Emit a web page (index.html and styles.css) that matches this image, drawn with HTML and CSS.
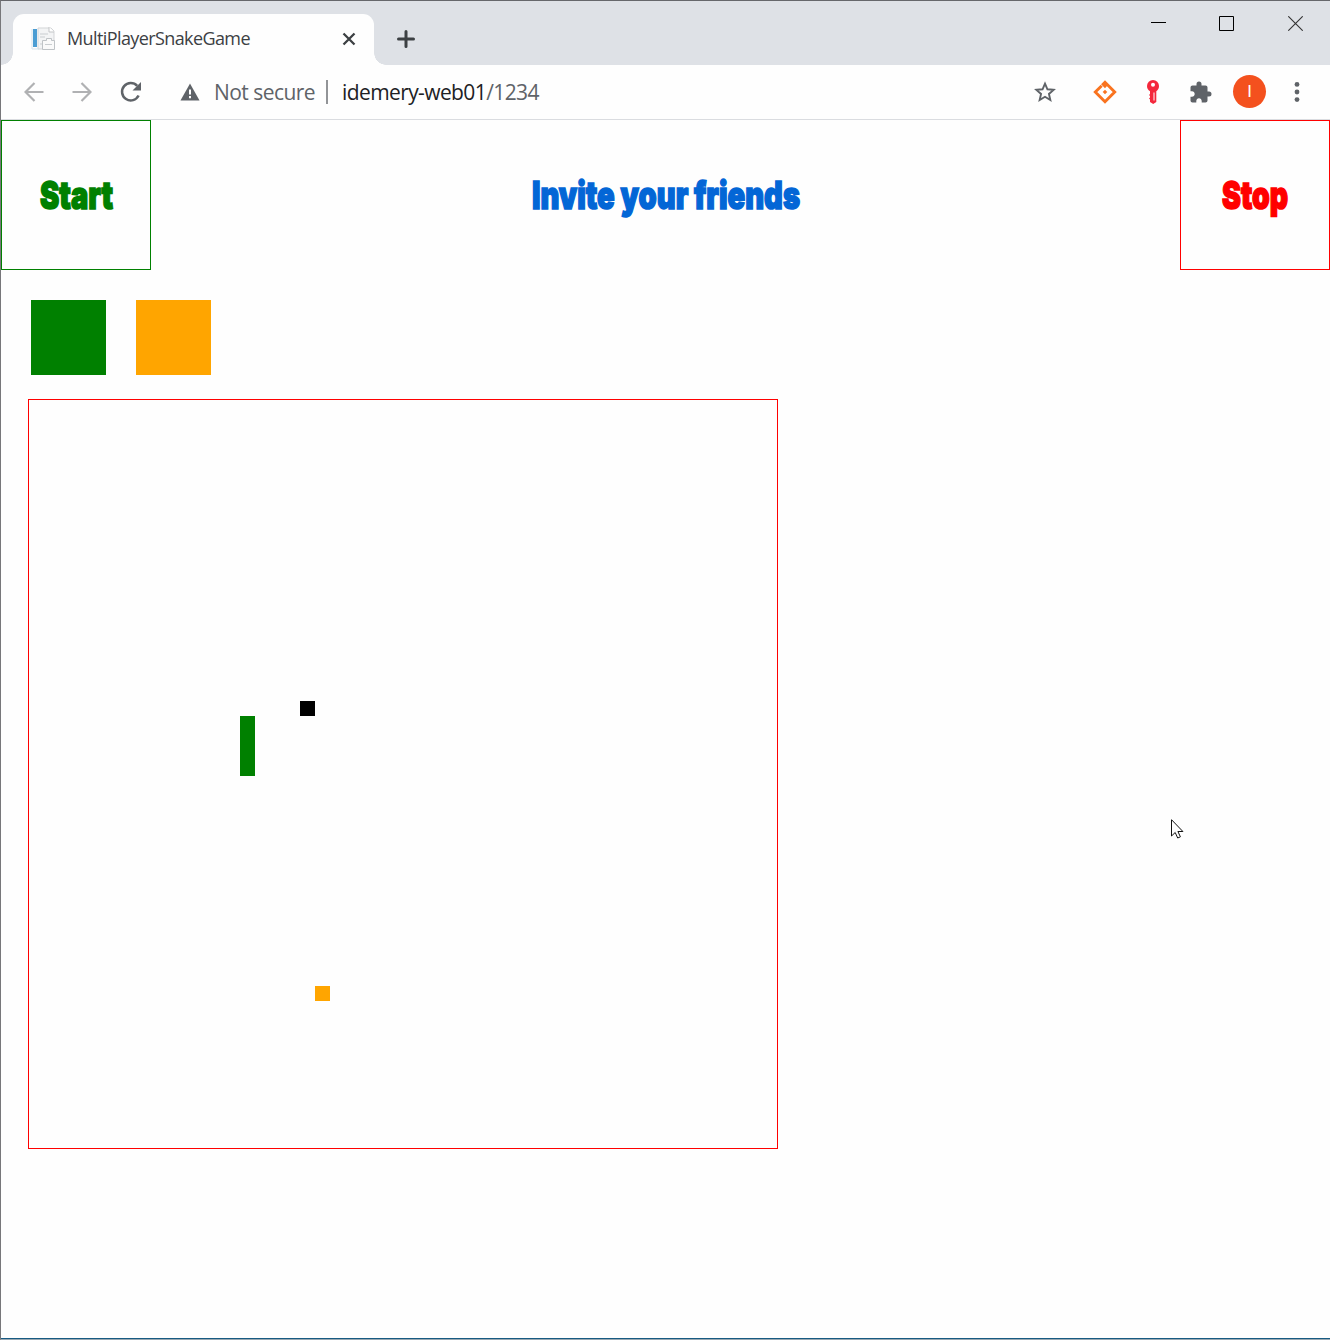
FILE: index.html
```html
<!DOCTYPE html>
<html lang="en">
<head>
<meta charset="utf-8">
<title>MultiPlayerSnakeGame</title>
<link rel="stylesheet" href="styles.css">
</head>
<body>
<div class="window">
  <header class="tabstrip">
    <div class="tab">
      <svg class="favicon" width="24" height="26" viewBox="0 0 24 26">
        <path d="M7 2h13l3 3v18H7z" fill="#f3f4f5" stroke="#d3d5d7"/>
        <path d="M18 1v5h5" fill="#fff" stroke="#c3c5c7"/>
        <path d="M1 3v20h7" fill="none" stroke="#d5e3ec"/>
        <path d="M2 3h4v18H2z" fill="#4b9dd3"/>
        <path d="M9 8h8M9 11h5M9 18h3" stroke="#c9cdd0"/>
        <path d="M11.500 14.500h4v-2h5v2h3v9h-12z" fill="#fafafa" stroke="#bfc3c6"/>
        <path d="M14 18.500h7" stroke="#c9cdd0"/>
      </svg>
      <span class="tab-title">MultiPlayerSnakeGame</span>
      <svg class="tab-close" width="14" height="14" viewBox="0 0 14 14"><path d="M1.500 1.500l11 11M12.500 1.500l-11 11" stroke="#3c4043" stroke-width="2.300"/></svg>
    </div>
    <svg class="new-tab" width="18" height="18" viewBox="0 0 18 18"><path d="M9 1.500v15M1.500 9h15" stroke="#3c4043" stroke-width="3" stroke-linecap="round"/></svg>
    <div class="window-buttons">
      <svg width="15" height="15" viewBox="0 0 15 15"><path d="M0 6.500h15" stroke="#000"/></svg>
      <svg width="15" height="15" viewBox="0 0 15 15"><path d="M.5 .5h14v14H.5z" fill="none" stroke="#000"/></svg>
      <svg width="15" height="15" viewBox="0 0 15 15"><path d="M.3 .3l14.400 14.400M14.700 .3L.3 14.700" stroke="#333" stroke-width="1.100"/></svg>
    </div>
  </header>
  <nav class="toolbar">
    <svg class="icon back" width="20" height="20" viewBox="0 0 20 20"><path d="M19.500 10H2M10.500 1L1.500 10l9 9" fill="none" stroke="#b0b1b3" stroke-width="2.200"/></svg>
    <svg class="icon forward" width="20" height="20" viewBox="0 0 20 20"><path d="M.5 10H18M9.500 1l9 9-9 9" fill="none" stroke="#b0b1b3" stroke-width="2.200"/></svg>
    <svg class="icon reload" width="22" height="22" viewBox="0 0 22 22"><path d="M18.600 14.500A8.700 8.700 0 1 1 17.200 4.900" fill="none" stroke="#5f6368" stroke-width="2.500"/><path d="M21 1v8.500h-8.500z" fill="#5f6368"/></svg>
    <svg class="icon warning" width="20" height="18" viewBox="0 0 20 18"><path d="M10 .5L19.500 17.500H.5z" fill="#5f6368"/><path d="M10 6.500v5M10 13v2.200" stroke="#fff" stroke-width="2"/></svg>
    <span class="secure">Not secure</span>
    <span class="divider"></span>
    <span class="address">idemery-web01<span class="path">/1234</span></span>
    <div class="actions">
      <svg width="22" height="22" viewBox="0 0 22 22"><path d="M11 2.600l2.450 5.700 6.200.55-4.700 4.100 1.400 6.050L11 15.800 5.650 19l1.400-6.050-4.700-4.100 6.200-.55z" fill="none" stroke="#5f6368" stroke-width="1.900"/></svg>
      <svg width="24" height="24" viewBox="0 0 24 24"><path d="M8.700 5.700L2.300 12l9.700 9.700 9.700-9.700L12 2.300l-1.900 1.900 2.900 2.900" fill="none" stroke="#f9731f" stroke-width="2.900"/><path d="M12 9.700l2.300 2.300-2.300 2.300L9.700 12z" fill="#f9731f"/></svg>
      <svg width="12" height="24" viewBox="0 0 12 24"><path fill-rule="evenodd" d="M6 0a6 6 0 0 1 6 6c0 2.500-1 4-2.700 5.200V22L6.200 24 3 22v-2.500l-1-1 1-1V16l-1-1 1-1v-2.800C1 10 0 8.500 0 6a6 6 0 0 1 6-6zm0 2.800a2 2 0 1 0 0 4 2 2 0 0 0 0-4z" fill="#f4283c"/><path d="M7 12.500v8" stroke="#fff" stroke-width="1"/></svg>
      <svg width="22" height="22" viewBox="1.500 .5 22 22"><path d="M20.500 11H19V7c0-1.100-.9-2-2-2h-4V3.500a2.500 2.500 0 0 0-5 0V5H4c-1.100 0-1.990.9-1.990 2v3.800H3.500c1.490 0 2.700 1.210 2.700 2.700s-1.210 2.700-2.700 2.700H2V20c0 1.100.9 2 2 2h3.800v-1.500c0-1.490 1.210-2.700 2.700-2.700s2.700 1.210 2.700 2.700V22H17c1.100 0 2-.9 2-2v-4h1.500a2.500 2.500 0 0 0 0-5z" fill="#5f6368"/></svg>
      <span class="avatar">I</span>
      <svg width="6" height="20" viewBox="0 0 6 20"><g fill="#5f6368"><circle cx="3" cy="2.400" r="2.400"/><circle cx="3" cy="10" r="2.400"/><circle cx="3" cy="17.600" r="2.400"/></g></svg>
    </div>
  </nav>
  <main class="page">
    <div class="controls">
      <div class="box start"><svg class="label" width="148" height="148"><text x="38" y="88" textLength="73" lengthAdjust="spacingAndGlyphs">Start</text></svg></div>
      <svg class="label invite" width="290" height="148"><text x="11" y="88" textLength="268" lengthAdjust="spacingAndGlyphs">Invite your friends</text></svg>
      <div class="box stop"><svg class="label" width="148" height="148"><text x="41" y="88" textLength="66" lengthAdjust="spacingAndGlyphs">Stop</text></svg></div>
    </div>
    <div class="players"><span class="player green"></span><span class="player orange"></span></div>
    <div class="board">
      <span class="cell food"></span>
      <span class="cell snake-green"></span>
      <span class="cell snake-orange"></span>
    </div>
  </main>
  <svg class="cursor" width="13" height="21" viewBox="0 0 13 21"><path d="M.5 .7v16.300l3.700-3.500 2.500 5.500 2.700-1.200-2.500-5.300h5z" fill="#fff" stroke="#111" stroke-width="1"/></svg>
</div>
</body>
</html>
```
FILE: styles.css
```css
* { box-sizing: border-box; }
body { margin: 0; background: #fefefe; font-family: "Open Sans", "Noto Sans", sans-serif; }
svg { display: block; flex: none; }
.window {
  position: relative;
  height: 1340px;
  display: flex;
  flex-direction: column;
  overflow: hidden;
  border-left: 1px solid #77777a;
  border-top: 1px solid #66676b;
  border-bottom: 1px solid #9aa9b3;
}
.tabstrip { height: 64px; display: flex; align-items: flex-start; background: #dee1e6; }
.tab {
  position: relative;
  width: 361px;
  height: 51px;
  margin: 13px 0 0 12px;
  padding: 0 0 2px 18px;
  display: flex;
  align-items: center;
  background: #fefefe;
  border-radius: 11px 11px 0 0;
}
.tab::before, .tab::after { content: ""; position: absolute; bottom: 0; width: 12px; height: 12px; }
.tab::before { left: -12px; background: radial-gradient(circle at 0 0, #dee1e6 11.500px, #fefefe 12px); }
.tab::after { right: -12px; background: radial-gradient(circle at 100% 0, #dee1e6 11.500px, #fefefe 12px); }
.tab-title { width: 183px; margin-left: 12px; padding-bottom: 2px; font-size: 18px; letter-spacing: -0.600px; color: #3c4043; white-space: nowrap; }
.tab-close { margin-left: 92px; }
.new-tab { margin: 29px 0 0 23px; }
.window-buttons { margin: 15px 27px 0 auto; display: flex; }
.window-buttons svg:nth-child(2) { margin: 0 54px 0 53px; }
.toolbar { height: 55px; padding-bottom: 1px; display: flex; align-items: center; border-bottom: 1px solid #dadce0; color: #5f6368; font-size: 21px; white-space: nowrap; }
.back { margin-left: 23px; }
.forward { margin-left: 28px; }
.reload { margin-left: 28px; }
.warning { margin-left: 38px; }
.secure { width: 101px; margin-left: 14px; padding-top: 1px; letter-spacing: -0.550px; }
.divider { width: 2px; height: 24px; margin-left: 11px; background: #929497; }
.address { margin-left: 14px; padding-top: 1px; letter-spacing: -0.600px; color: #202124; }
.path { color: #5f6368; }
.actions { margin: 0 30px 0 auto; display: flex; align-items: center; }
.actions svg:nth-child(2) { margin-left: 37px; }
.actions svg:nth-child(3) { margin-left: 30px; }
.actions svg:nth-child(4) { margin-left: 31px; }
.avatar { width: 33px; height: 33px; margin: 0 28px 0 21px; border-radius: 50%; background: #f4511e; color: #fff; font: 17px/33px Roboto, sans-serif; text-align: center; }
.page { flex: 1; border-bottom: 1px solid #175a82; }
.controls { display: flex; justify-content: space-between; align-items: center; height: 150px; }
.box { width: 150px; height: 150px; border: 1px solid; }
.start { color: #008000; }
.stop { color: #f00; }
.invite { color: #0366d6; }
.label { overflow: visible; font: 900 38px Inter, sans-serif; fill: currentColor; stroke: currentColor; stroke-width: 1.600px; }
.players { display: flex; gap: 30px; padding: 30px 30px 24px; }
.player { width: 75px; height: 75px; }
.green, .snake-green { background: #008000; }
.orange, .snake-orange { background: #ffa500; }
.board { position: relative; width: 750px; height: 750px; margin-left: 27px; border: 1px solid #f00; }
.cell { position: absolute; width: 15px; height: 15px; }
.food { left: 271px; top: 301px; background: #000; }
.snake-green { left: 211px; top: 316px; height: 60px; }
.snake-orange { left: 286px; top: 586px; }
.cursor { position: absolute; left: 1170px; top: 818px; }
```
